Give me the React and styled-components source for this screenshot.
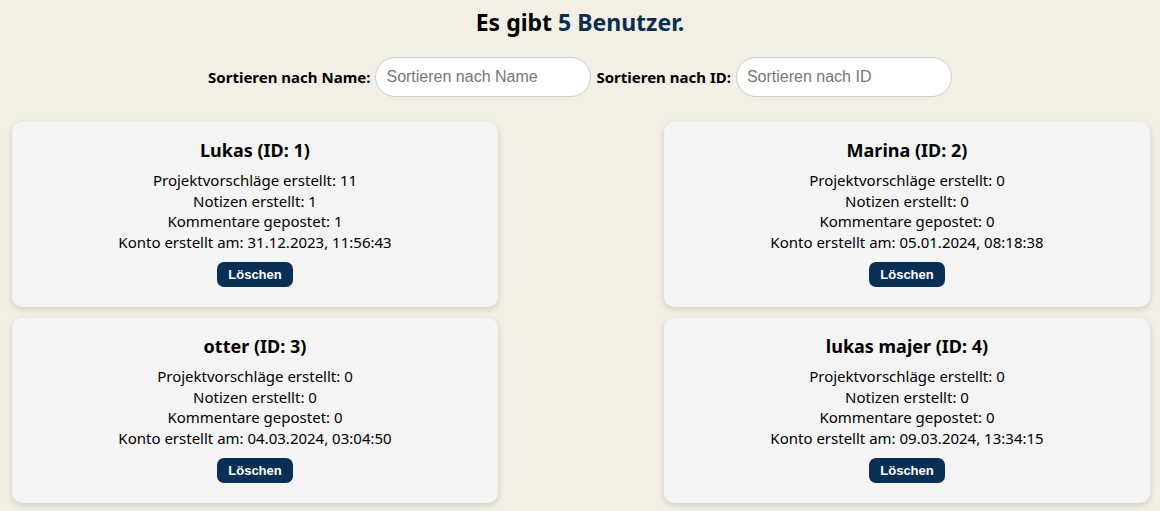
import styled, { createGlobalStyle } from "styled-components";

const users = [
  { id: 1, name: "Lukas", projects: 11, notes: 1, comments: 1, created: "31.12.2023, 11:56:43" },
  { id: 2, name: "Marina", projects: 0, notes: 0, comments: 0, created: "05.01.2024, 08:18:38" },
  { id: 3, name: "otter", projects: 0, notes: 0, comments: 0, created: "04.03.2024, 03:04:50" },
  { id: 4, name: "lukas majer", projects: 0, notes: 0, comments: 0, created: "09.03.2024, 13:34:15" },
];

const GlobalStyle = createGlobalStyle`
  body {
    margin: 0;
    background: #f4efe4;
    font-family: "Noto Sans", "Open Sans", sans-serif;
    color: #000;
  }
`;

const App = () => {
  return (
    <>
      <GlobalStyle />
      <Page>
        <Heading>
          Es gibt <Count>5 Benutzer.</Count>
        </Heading>
        <SortBar>
          <SortLabel htmlFor="sortName">Sortieren nach Name:</SortLabel>
          <SortInput id="sortName" type="text" placeholder="Sortieren nach Name" />
          <SortLabel htmlFor="sortId">Sortieren nach ID:</SortLabel>
          <SortInput id="sortId" type="text" placeholder="Sortieren nach ID" />
        </SortBar>
        <CardGrid>
          {users.map((user) => (
            <UserCard key={user.id}>
              <UserName>
                {user.name} (ID: {user.id})
              </UserName>
              <Stat>Projektvorschläge erstellt: {user.projects}</Stat>
              <Stat>Notizen erstellt: {user.notes}</Stat>
              <Stat>Kommentare gepostet: {user.comments}</Stat>
              <Stat>Konto erstellt am: {user.created}</Stat>
              <DeleteBtn type="button">Löschen</DeleteBtn>
            </UserCard>
          ))}
        </CardGrid>
      </Page>
    </>
  );
};

const Page = styled.main`
  display: flex;
  flex-direction: column;
  align-items: center;
  padding-top: 8px;
`;

const Heading = styled.h1`
  margin: 0;
  font-size: 23px;
  font-weight: 700;
  line-height: 29px;
`;

const Count = styled.span`
  color: #0b2d4e;
`;

const SortBar = styled.div`
  display: flex;
  align-items: center;
  gap: 5px;
  margin-top: 20px;
`;

const SortLabel = styled.label`
  font-size: 15px;
  font-weight: 700;
`;

const SortInput = styled.input`
  width: 216px;
  height: 40px;
  box-sizing: border-box;
  padding: 0 10px;
  border: 1px solid #cccccc;
  border-radius: 20px;
  background: #fff;
  font-family: "Liberation Sans", Arial, sans-serif;
  font-size: 16px;
  outline: none;

  &::placeholder {
    color: #777777;
  }
`;

const CardGrid = styled.div`
  align-self: stretch;
  display: grid;
  grid-template-columns: 486px 486px;
  justify-content: space-between;
  row-gap: 11px;
  padding: 25px 10px 8px 12px;
`;

const UserCard = styled.section`
  display: flex;
  flex-direction: column;
  align-items: center;
  height: 185px;
  box-sizing: border-box;
  padding-top: 17px;
  background: #f4f4f4;
  border-radius: 10px;
  box-shadow: 0 2px 6px rgba(0, 0, 0, 0.15);
`;

const UserName = styled.h2`
  margin: 0 0 8px;
  font-size: 18px;
  font-weight: 700;
  line-height: 23px;
`;

const Stat = styled.p`
  margin: 0;
  font-size: 15px;
  line-height: 20.7px;
`;

const DeleteBtn = styled.button`
  margin-top: 9px;
  height: 25px;
  padding: 0 11px;
  border: none;
  border-radius: 7px;
  background: #0a2f55;
  color: #fff;
  font-family: "Liberation Sans", Arial, sans-serif;
  font-size: 13px;
  font-weight: 700;
  cursor: pointer;
`;

export default App;
